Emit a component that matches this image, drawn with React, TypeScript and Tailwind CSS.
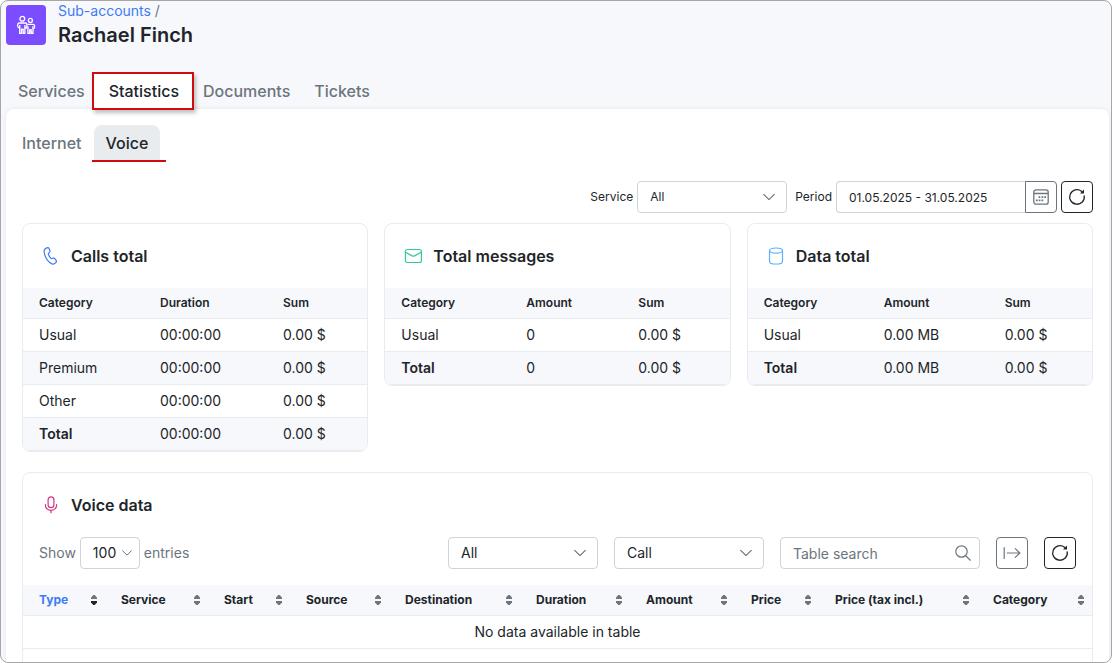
import type { ReactNode } from "react";
import clsx from "clsx";

type SummaryTable = {
  id: string;
  title: string;
  icon: ReactNode;
  columns: { label: string; width: string }[];
  rows: string[][];
};

const voiceColumns = [
  { label: "Type", width: "w-[82px]" },
  { label: "Service", width: "w-[103px]" },
  { label: "Start", width: "w-[82px]" },
  { label: "Source", width: "w-[99px]" },
  { label: "Destination", width: "w-[131px]" },
  { label: "Duration", width: "w-[110px]" },
  { label: "Amount", width: "w-[105px]" },
  { label: "Price", width: "w-[84px]" },
  { label: "Price (tax incl.)", width: "w-[158px]" },
  { label: "Category", width: "w-[115px]" },
];

function PeopleIcon() {
  return (
    <svg width="20" height="20" viewBox="0 0 20 20" fill="none" stroke="white" strokeWidth="1.3" strokeLinejoin="round">
      <circle cx="6.3" cy="3.8" r="2.4" />
      <circle cx="14.4" cy="5.4" r="2" />
      <path d="M3.7 18.4v-5.2c-1.3-.2-2-.9-2-2.1V9.7c0-1 .7-1.7 1.7-1.7h5.8c1 0 1.7.7 1.7 1.7v1.4c0 1.2-.7 1.9-2 2.1v5.2H7.2v-4.2H5.5v4.2z" />
      <path d="M3.8 10v3.2M8.9 10v3.2" />
      <path d="M11.5 9.400h5.4c1 0 1.700.7 1.700 1.600v1c0 1-.6 1.600-1.600 1.800v4.600h-1.800v-3.800h-1.500v3.800h-1.800v-4.700c-.7-.2-1.200-.6-1.500-1.200" />
      <path d="M16.9 11.3v2.5M12 11.3v2.5" />
    </svg>
  );
}

function PhoneIcon() {
  return (
    <svg width="18" height="18" viewBox="0 0 18 18" fill="none" stroke="#3f7af7" strokeWidth="1.2" strokeLinejoin="round">
      <path d="M3.9 1.400 5 .9c.9-.4 1.700-.1 2.100.7l.8 1.900c.3.700.1 1.300-.4 1.800l-.9.9c-.3.300-.3.700-.2 1.100.5 1.500 1.200 2.700 2.300 3.900.3.300.7.400 1.100.3l1.300-.4c.7-.2 1.300 0 1.700.6l1.300 1.700c.5.700.4 1.500-.2 2.100l-.7.7c-.9.900-2.100 1.200-3.200.7C5.700 14.800 2.800 10.200 2.100 4.500c-.2-1.400.5-2.500 1.800-3.100z" />
    </svg>
  );
}

function MailIcon() {
  return (
    <svg width="18" height="18" viewBox="0 0 18 18" fill="none" stroke="#34c997" strokeWidth="1.2" strokeLinecap="round" strokeLinejoin="round">
      <rect x="1.400" y="2.500" width="16" height="13" rx="2" />
      <path d="M1.600 5.300l6.600 3.600c.8.400 1.600.400 2.400 0l6.600-3.600" />
    </svg>
  );
}

function DatabaseIcon() {
  return (
    <svg width="18" height="18" viewBox="0 0 18 18" fill="none" stroke="#5fb0f8" strokeWidth="1.2">
      <ellipse cx="9" cy="3.6" rx="6.5" ry="2.6" />
      <path d="M2.5 3.6v10.8c0 1.4 2.9 2.6 6.5 2.6s6.5-1.200 6.5-2.600V3.600" />
    </svg>
  );
}

function MicIcon() {
  return (
    <svg width="18" height="18" viewBox="0 0 18 18" fill="none" stroke="#d63384" strokeWidth="1.2" strokeLinecap="round">
      <rect x="6.1" y="0.9" width="5.8" height="10.8" rx="2.9" />
      <path d="M3.4 8.6v.6c0 3 2.500 5.200 5.600 5.200s5.600-2.200 5.600-5.200v-.6M9 14.400v2.400" />
    </svg>
  );
}

function CalendarIcon() {
  return (
    <svg width="16" height="16" viewBox="0 0 16 16" fill="none" stroke="#6c757d" strokeWidth="1.3">
      <rect x="0.8" y="0.8" width="14.4" height="14.4" rx="2.2" />
      <path d="M1 4.5h14" />
      <path
        d="M5.500 7.200h1.800v1.800H5.500zM8.500 7.200h1.800v1.800H8.500zM11.300 7.200h1.800v1.800h-1.800zM2.900 10.400h1.800v1.800H2.900zM5.700 10.400h1.800v1.800H5.700zM8.500 10.400h1.800v1.800H8.500z"
        fill="#6c757d"
        stroke="none"
      />
    </svg>
  );
}

function RefreshIcon() {
  return (
    <svg width="18" height="18" viewBox="0 0 18 18" fill="none" stroke="#212529" strokeWidth="1.3" strokeLinecap="round">
      <path d="M16.2 7.8A7.3 7.3 0 1 1 13.5 3.2l1.5 1.2" />
      <path d="M16 1.500v4h-4z" fill="#212529" stroke="none" />
    </svg>
  );
}

function ExportIcon() {
  return (
    <svg width="18" height="18" viewBox="0 0 18 18" fill="none" stroke="#6c757d" strokeWidth="1.2" strokeLinecap="round" strokeLinejoin="round">
      <path d="M1.2 3.5v11M4.2 9h12.6M12.3 4.600 16.800 9l-4.500 4.400" />
    </svg>
  );
}

function SearchIcon() {
  return (
    <svg width="16" height="16" viewBox="0 0 16 16" fill="none" stroke="#6c757d" strokeWidth="1.2" strokeLinecap="round">
      <circle cx="6.5" cy="6.5" r="5.7" />
      <path d="M10.7 10.7 15.3 15.2" />
    </svg>
  );
}

function SortIcon({ active = false }: { active?: boolean }) {
  return (
    <svg width="6" height="10" viewBox="0 0 6 10" className="shrink-0">
      <path d="M2.300 0h1.400L6 2.600V4H0V2.600z" fill="#6c757d" />
      <path d="M2.300 10h1.400L6 7.400V6H0v1.400z" fill={active ? "#212529" : "#6c757d"} />
    </svg>
  );
}

function Chevron({ small = false }: { small?: boolean }) {
  return (
    <svg
      width={small ? 10 : 12}
      height={small ? 6 : 7}
      viewBox="0 0 12 7"
      fill="none"
      stroke="#6c757d"
      strokeWidth="1.2"
      strokeLinecap="round"
      strokeLinejoin="round"
      className={clsx("pointer-events-none absolute top-1/2 -translate-y-1/2", small ? "right-2" : "right-3")}
    >
      <path d="M.7.8 6 6.1 11.3.8" />
    </svg>
  );
}

function Select({
  id,
  label,
  value,
  className,
  small,
}: {
  id: string;
  label?: string;
  value: string;
  className: string;
  small?: boolean;
}) {
  return (
    <div className={clsx("relative h-8", className)}>
      <select
        id={id}
        aria-label={label}
        className="h-8 w-full appearance-none rounded border border-[#ced4da] bg-white pl-3 outline-none"
      >
        <option>{value}</option>
      </select>
      <Chevron small={small} />
    </div>
  );
}

function CardTitle({ icon, children }: { icon: ReactNode; children: ReactNode }) {
  return (
    <div className="flex h-16 items-center gap-[11px] pl-[19px]">
      {icon}
      <h2 className="text-base font-semibold">{children}</h2>
    </div>
  );
}

const summaryTables: SummaryTable[] = [
  {
    id: "calls",
    title: "Calls total",
    icon: <PhoneIcon />,
    columns: [
      { label: "Category", width: "w-[137px]" },
      { label: "Duration", width: "w-[123px]" },
      { label: "Sum", width: "" },
    ],
    rows: [
      ["Usual", "00:00:00", "0.00 $"],
      ["Premium", "00:00:00", "0.00 $"],
      ["Other", "00:00:00", "0.00 $"],
      ["Total", "00:00:00", "0.00 $"],
    ],
  },
  {
    id: "messages",
    title: "Total messages",
    icon: <MailIcon />,
    columns: [
      { label: "Category", width: "w-[141px]" },
      { label: "Amount", width: "w-[112px]" },
      { label: "Sum", width: "" },
    ],
    rows: [
      ["Usual", "0", "0.00 $"],
      ["Total", "0", "0.00 $"],
    ],
  },
  {
    id: "data",
    title: "Data total",
    icon: <DatabaseIcon />,
    columns: [
      { label: "Category", width: "w-[136px]" },
      { label: "Amount", width: "w-[121px]" },
      { label: "Sum", width: "" },
    ],
    rows: [
      ["Usual", "0.00 MB", "0.00 $"],
      ["Total", "0.00 MB", "0.00 $"],
    ],
  },
];

function SummaryCard({ table }: { table: SummaryTable }) {
  return (
    <section className="overflow-hidden rounded-lg border border-[#e9ecef] bg-white">
      <CardTitle icon={table.icon}>{table.title}</CardTitle>
      <table className="w-full table-fixed border-separate border-spacing-0 text-left">
        <thead>
          <tr className="h-[31px] bg-[#f7f8fc] text-xs">
            {table.columns.map((column) => (
              <th
                key={column.label}
                className={clsx("border-b border-[#e9ecef] p-0 font-semibold first:pl-4", column.width)}
              >
                {column.label}
              </th>
            ))}
          </tr>
        </thead>
        <tbody>
          {table.rows.map((row) => (
            <tr key={row[0]} className="h-[33px] text-sm even:bg-[#f7f8fc]">
              {row.map((cell, index) => (
                <td
                  key={index}
                  className={clsx(
                    "border-b border-[#e9ecef] p-0 first:pl-4",
                    cell === "Total" && "font-semibold",
                  )}
                >
                  {cell}
                </td>
              ))}
            </tr>
          ))}
        </tbody>
      </table>
    </section>
  );
}

function VoiceData() {
  return (
    <section className="mt-5 overflow-hidden rounded-lg border border-[#e9ecef] bg-white">
      <CardTitle icon={<MicIcon />}>Voice data</CardTitle>
      <div className="flex items-center justify-between px-4 pb-4 text-sm">
        <div className="flex items-center gap-1 text-[#6c757d]">
          <label htmlFor="page-size">Show</label>
          <Select id="page-size" value="100" className="w-15 text-[#212529]" small />
          <span>entries</span>
        </div>
        <div className="flex items-center gap-4">
          <Select id="direction" label="Direction" value="All" className="w-[150px]" />
          <Select id="voice-type" label="Type" value="Call" className="w-[150px]" />
          <div className="relative">
            <input
              type="search"
              aria-label="Table search"
              placeholder="Table search"
              className="h-8 w-50 rounded border border-[#ced4da] pl-3 outline-none placeholder:text-[#6c757d]"
            />
            <span className="pointer-events-none absolute top-2 right-[9px]">
              <SearchIcon />
            </span>
          </div>
          <button
            type="button"
            aria-label="Export"
            className="flex size-8 items-center justify-center rounded border border-[#6c757d]"
          >
            <ExportIcon />
          </button>
          <button
            type="button"
            aria-label="Refresh table"
            className="flex size-8 items-center justify-center rounded border border-[#212529]"
          >
            <RefreshIcon />
          </button>
        </div>
      </div>
      <table className="w-full table-fixed border-separate border-spacing-0 text-left">
        <thead>
          <tr className="h-[31px] bg-[#f7f8fc] text-xs">
            {voiceColumns.map((column, index) => (
              <th key={column.label} className={clsx("border-b border-[#e9ecef] p-0 font-bold", column.width)}>
                <div className="flex items-center justify-between pr-2 pl-4">
                  <span className={clsx("whitespace-nowrap", index === 0 && "text-[#3f7af7]")}>
                    {column.label}
                  </span>
                  <SortIcon active={index === 0} />
                </div>
              </th>
            ))}
          </tr>
        </thead>
        <tbody>
          <tr className="h-[33px] text-sm">
            <td colSpan={voiceColumns.length} className="border-b border-[#e9ecef] p-0 text-center">
              No data available in table
            </td>
          </tr>
        </tbody>
      </table>
      <div className="h-16" />
    </section>
  );
}

export default function App() {
  return (
    <div className="h-screen overflow-hidden rounded-lg border border-[#a6a6a6] bg-[#f7f8fc] font-['Inter',sans-serif] text-[#212529]">
      <header className="flex gap-3 pt-1 pl-[5px]">
        <div className="flex size-10 items-center justify-center rounded bg-[#7c4dff]">
          <PeopleIcon />
        </div>
        <div>
          <nav aria-label="Breadcrumb" className="-mt-1 text-sm text-[#6c757d]">
            <a href="#sub-accounts" className="text-[#3f7af7]">
              Sub-accounts
            </a>{" "}
            /
          </nav>
          <h1 className="text-xl font-semibold">Rachael Finch</h1>
        </div>
      </header>

      <nav aria-label="Account" className="mt-6 flex h-9 items-center pl-[5px] font-medium text-[#6c757d]">
        <a href="#services" className="px-3">
          Services
        </a>
        <a
          href="#statistics"
          aria-current="page"
          className="relative flex h-9 items-center rounded-t-lg bg-white px-3 text-[#212529]"
        >
          <span className="absolute -inset-y-px -right-[3px] -left-[5px] border-2 border-[#d00b10] bg-white shadow-[2px_3px_4px_rgba(0,0,0,0.25)]" />
          <span className="relative">Statistics</span>
        </a>
        <a href="#documents" className="px-3">
          Documents
        </a>
        <a href="#tickets" className="px-3">
          Tickets
        </a>
      </nav>

      <main className="mr-0.5 ml-[5px] rounded-t-lg bg-white px-4 pt-4 shadow-[0_0_4px_rgba(0,0,0,0.08)]">
        <nav aria-label="Statistics" className="-ml-3 flex h-9 items-center font-medium text-[#6c757d]">
          <a href="#internet" className="px-3">
            Internet
          </a>
          <a
            href="#voice"
            aria-current="page"
            className="relative flex h-9 items-center rounded-t-lg bg-[#e9ecef] px-3 text-[#212529]"
          >
            Voice
            <span className="absolute -right-1.5 -bottom-px -left-0.5 h-0.5 bg-[#d00b10]" />
          </a>
        </nav>

        <div className="mt-5 flex items-center justify-end text-xs">
          <label htmlFor="service" className="mr-1">
            Service
          </label>
          <Select id="service" value="All" className="mr-2 w-[150px]" />
          <label htmlFor="period" className="mr-1">
            Period
          </label>
          <input
            id="period"
            defaultValue="01.05.2025 - 31.05.2025"
            className="h-8 w-[189px] rounded-l border border-r-0 border-[#ced4da] pl-3 outline-none"
          />
          <button
            type="button"
            aria-label="Choose period"
            className="mr-1 flex size-8 items-center justify-center rounded-r border border-[#6c757d]"
          >
            <CalendarIcon />
          </button>
          <button
            type="button"
            aria-label="Refresh statistics"
            className="flex size-8 items-center justify-center rounded border border-[#212529]"
          >
            <RefreshIcon />
          </button>
        </div>

        <div className="mt-[10px] grid grid-cols-3 items-start gap-4">
          {summaryTables.map((table) => (
            <SummaryCard key={table.id} table={table} />
          ))}
        </div>

        <VoiceData />
      </main>
    </div>
  );
}
